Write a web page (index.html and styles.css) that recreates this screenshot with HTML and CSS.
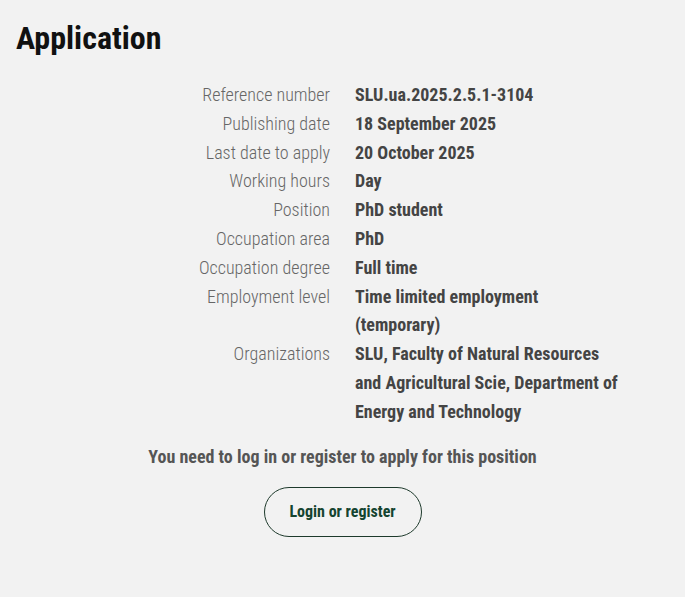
FILE: index.html
```html
<!DOCTYPE html>
<html lang="en">
<head>
<meta charset="utf-8">
<title>Application</title>
<link rel="stylesheet" href="styles.css">
</head>
<body>
<main class="page">
  <h1 class="title">Application</h1>
  <dl class="facts">
    <dt>Reference number</dt><dd>SLU.ua.2025.2.5.1-3104</dd>
    <dt>Publishing date</dt><dd>18 September 2025</dd>
    <dt>Last date to apply</dt><dd>20 October 2025</dd>
    <dt>Working hours</dt><dd>Day</dd>
    <dt>Position</dt><dd>PhD student</dd>
    <dt>Occupation area</dt><dd>PhD</dd>
    <dt>Occupation degree</dt><dd>Full time</dd>
    <dt>Employment level</dt><dd>Time limited employment (temporary)</dd>
    <dt>Organizations</dt><dd>SLU, Faculty of Natural Resources and Agricultural Scie, Department of Energy and Technology</dd>
  </dl>
  <p class="notice">You need to log in or register to apply for this position</p>
  <div class="actions"><a class="btn" href="#">Login or register</a></div>
</main>
</body>
</html>
```

FILE: styles.css
```css
html, body {
  margin: 0;
  padding: 0;
  background: #f2f2f2;
}
body {
  font-family: "Roboto Condensed", Roboto, "Liberation Sans", sans-serif;
  font-stretch: 75%;
  color: #444;
}
.page {
  padding: 16px 16px 40px;
}
.title {
  margin: 2px 0 0;
  font-size: 32px;
  line-height: 40px;
  font-weight: 700;
  color: #111;
}
.facts {
  display: grid;
  grid-template-columns: 1fr 1fr;
  column-gap: 25px;
  margin: 23px 0 0;
  font-size: 18px;
  line-height: 1.6;
}
.facts dt {
  text-align: right;
  font-weight: 300;
  color: #666;
}
.facts dd {
  margin: 0;
  max-width: 265px;
  font-weight: 700;
  color: #444;
}
.notice {
  margin: 15px 0 0;
  text-align: center;
  font-size: 18px;
  line-height: 29px;
  font-weight: 700;
  color: #555;
}
.actions {
  display: flex;
  justify-content: center;
  margin-top: 16px;
}
.btn {
  display: inline-flex;
  align-items: center;
  justify-content: center;
  width: 156px;
  height: 48px;
  border: 1px solid #1e3a2c;
  border-radius: 25px;
  font-size: 16px;
  font-weight: 700;
  color: #154430;
  text-decoration: none;
}
```
